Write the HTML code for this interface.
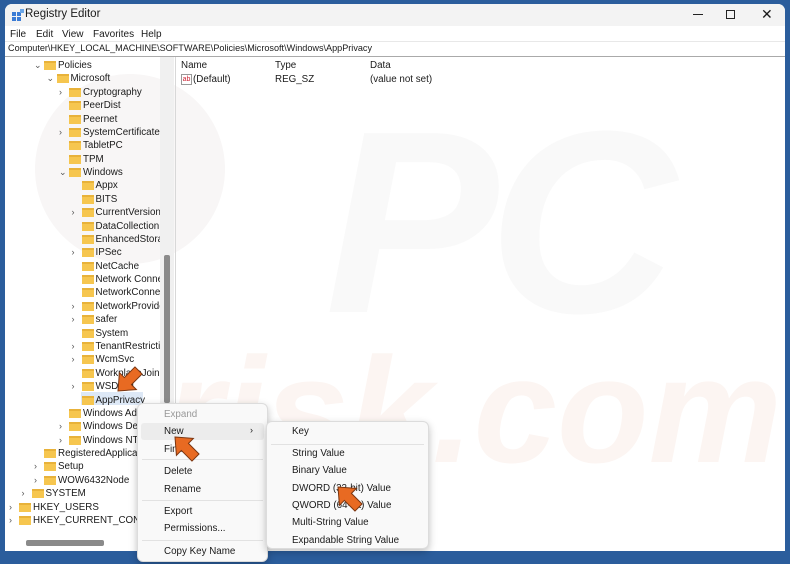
<!DOCTYPE html>
<html><head><meta charset="utf-8"><style>
*{margin:0;padding:0;box-sizing:border-box}
body{width:790px;height:564px;background:#2b5d9c;font-family:"Liberation Sans",sans-serif;font-size:9.8px;color:#1a1a1a;position:relative;overflow:hidden}
.win{position:absolute;left:5px;top:4px;width:780px;height:547px;background:#fff;border-radius:7px 7px 0 0;overflow:hidden}
.title{position:absolute;left:0;top:0;width:780px;height:22px;background:#f3f3f3}
.abs{position:absolute;white-space:nowrap}
.t{position:absolute;white-space:nowrap;line-height:13px}
.fold{position:absolute;width:12px;height:9px;background:#f6c64f;border-top:2px solid #e8b23a}
.arr{position:absolute;font-size:9px;color:#555}
.menu{position:absolute;background:#f9f9f9;border:1px solid #dcdcdc;border-radius:6px;box-shadow:0 3px 8px rgba(0,0,0,.25)}
.sep{position:absolute;height:1px;background:#e2e2e2}
</style></head><body>
<div class="win">
 <div class="title"></div>
 <svg class="abs" style="left:6px;top:5px" width="14" height="13"><rect x="1" y="3" width="4" height="4" fill="#3a7bd5"/><rect x="6" y="3" width="4" height="4" fill="#3a7bd5"/><rect x="1" y="8" width="4" height="4" fill="#3a7bd5"/><rect x="6" y="8" width="4" height="4" fill="#3a7bd5"/><rect x="9" y="0" width="4" height="4" fill="#6aa6e8"/></svg>
 <div class="abs" style="left:20px;top:4px;font-size:11.5px">Registry Editor</div>
 <div class="abs" style="left:688px;top:10px;width:10px;height:1px;background:#222"></div>
 <div class="abs" style="left:721px;top:6px;width:9px;height:9px;border:1px solid #222"></div>
 <div class="abs" style="left:756px;top:2px;font-size:14px">✕</div>
 <div class="abs" style="left:5px;top:25px;font-size:10px"><span style="position:absolute;left:0">File</span><span style="position:absolute;left:26px">Edit</span><span style="position:absolute;left:52px">View</span><span style="position:absolute;left:83px">Favorites</span><span style="position:absolute;left:131px">Help</span></div>
 <div class="abs" style="left:0;top:37px;width:780px;height:1px;background:#e8e8e8"></div>
 <div class="abs" style="left:3px;top:39px;font-size:9.1px">Computer\HKEY_LOCAL_MACHINE\SOFTWARE\Policies\Microsoft\Windows\AppPrivacy</div>
 <div class="abs" style="left:0;top:52px;width:780px;height:1px;background:#aaa"></div>
 <div class="abs" style="left:320px;top:70px;font-size:260px;font-weight:bold;font-style:italic;color:#f9f9f9;letter-spacing:-10px">PC</div>
 <div class="abs" style="left:30px;top:70px;width:190px;height:190px;border-radius:50%;background:#f8f6f6"></div>
 <div class="abs" style="left:160px;top:320px;font-size:150px;font-weight:bold;font-style:italic;color:#fcf5f2">risk.com</div>
 <div id="tree"></div>
 <div class="abs" style="left:155px;top:53px;width:14px;height:485px;background:#f0f0f0"></div>
 <div class="abs" style="left:159px;top:251px;width:6px;height:148px;background:#8a8a8a;border-radius:2px"></div>
 <div class="abs" style="left:170px;top:53px;width:1px;height:494px;background:#d8d8d8"></div>
 <div class="abs" style="left:21px;top:536px;width:78px;height:6px;background:#8a8a8a;border-radius:2px"></div>
 <div class="t" style="left:176px;top:55px">Name</div>
 <div class="t" style="left:270px;top:55px">Type</div>
 <div class="t" style="left:365px;top:55px">Data</div>
 <div class="abs" style="left:176px;top:70px;width:11px;height:11px;border:1px solid #999;font-size:7px;color:#c23;line-height:9px;text-align:center">ab</div>
 <div class="t" style="left:188px;top:69px">(Default)</div>
 <div class="t" style="left:270px;top:69px">REG_SZ</div>
 <div class="t" style="left:365px;top:69px">(value not set)</div>
</div>
<div class="menu" style="left:137px;top:403px;width:131px;height:159px">
 <div class="abs" style="left:3px;top:19px;width:123px;height:17px;background:#ececec;border-radius:3px"></div>
 <div class="t" style="left:26px;top:4px;color:#999">Expand</div>
 <div class="t" style="left:26px;top:21px">New</div>
 <div class="t" style="left:112px;top:20px;font-size:9px">›</div>
 <div class="t" style="left:26px;top:39px">Find...</div>
 <div class="sep" style="left:4px;top:55px;width:121px"></div>
 <div class="t" style="left:26px;top:61px">Delete</div>
 <div class="t" style="left:26px;top:79px">Rename</div>
 <div class="sep" style="left:4px;top:96px;width:121px"></div>
 <div class="t" style="left:26px;top:101px">Export</div>
 <div class="t" style="left:26px;top:118px">Permissions...</div>
 <div class="sep" style="left:4px;top:136px;width:121px"></div>
 <div class="t" style="left:26px;top:141px">Copy Key Name</div>
</div>
<div class="menu" style="left:266px;top:421px;width:163px;height:128px">
 <div class="t" style="left:25px;top:3px">Key</div>
 <div class="sep" style="left:4px;top:22px;width:153px"></div>
 <div class="t" style="left:25px;top:25px">String Value</div>
 <div class="t" style="left:25px;top:42px">Binary Value</div>
 <div class="t" style="left:25px;top:60px">DWORD (32-bit) Value</div>
 <div class="t" style="left:25px;top:77px">QWORD (64-bit) Value</div>
 <div class="t" style="left:25px;top:94px">Multi-String Value</div>
 <div class="t" style="left:25px;top:112px">Expandable String Value</div>
</div>
<svg class="abs" style="left:0;top:0" width="790" height="564">
 <g fill="#e86a22" stroke="#7a3510" stroke-width="1">
  <polygon transform="translate(118,391) rotate(-135)" points="0,0 12,14 5,14 5,29 -5,29 -5,14 -12,14"/>
  <polygon transform="translate(175,437) rotate(-45)" points="0,0 12,14 5,14 5,29 -5,29 -5,14 -12,14"/>
  <polygon transform="translate(338,487) rotate(-45)" points="0,0 12,14 5,14 5,29 -5,29 -5,14 -12,14"/>
 </g>
</svg>
<script>
var items=[["Policies",3,"v"],["Microsoft",4,"v"],["Cryptography",5,">"],["PeerDist",5,""],["Peernet",5,""],["SystemCertificates",5,">"],["TabletPC",5,""],["TPM",5,""],["Windows",5,"v"],["Appx",6,""],["BITS",6,""],["CurrentVersion",6,">"],["DataCollection",6,""],["EnhancedStorag",6,""],["IPSec",6,">"],["NetCache",6,""],["Network Conne",6,""],["NetworkConnec",6,""],["NetworkProvide",6,">"],["safer",6,">"],["System",6,""],["TenantRestrictic",6,">"],["WcmSvc",6,">"],["WorkplaceJoin",6,""],["WSDAPI",6,">"],["AppPrivacy",6,""],["Windows Adv",5,""],["Windows De",5,">"],["Windows NT",5,">"],["RegisteredApplicat",3,""],["Setup",3,">"],["WOW6432Node",3,">"],["SYSTEM",2,">"],["HKEY_USERS",1,">"],["HKEY_CURRENT_CONFIG",1,">"]];
var h='<div class="abs" style="left:76px;top:388px;width:62px;height:13px;background:#dde8f6"></div>';
items.forEach(function(it,i){var y=55+13.38*i;var tx=28+12.5*(it[1]-1);
h+='<div class="fold" style="left:'+(tx-14)+'px;top:'+(y+2)+'px"></div>';
h+='<div class="t" style="left:'+tx+'px;top:'+y+'px">'+it[0]+'</div>';
if(it[2])h+='<div class="arr" style="left:'+(tx-24)+'px;top:'+(y+1)+'px">'+(it[2]=="v"?"&#8964;":"&#8250;")+'</div>';});
document.getElementById("tree").innerHTML=h;
</script>
</body></html>
